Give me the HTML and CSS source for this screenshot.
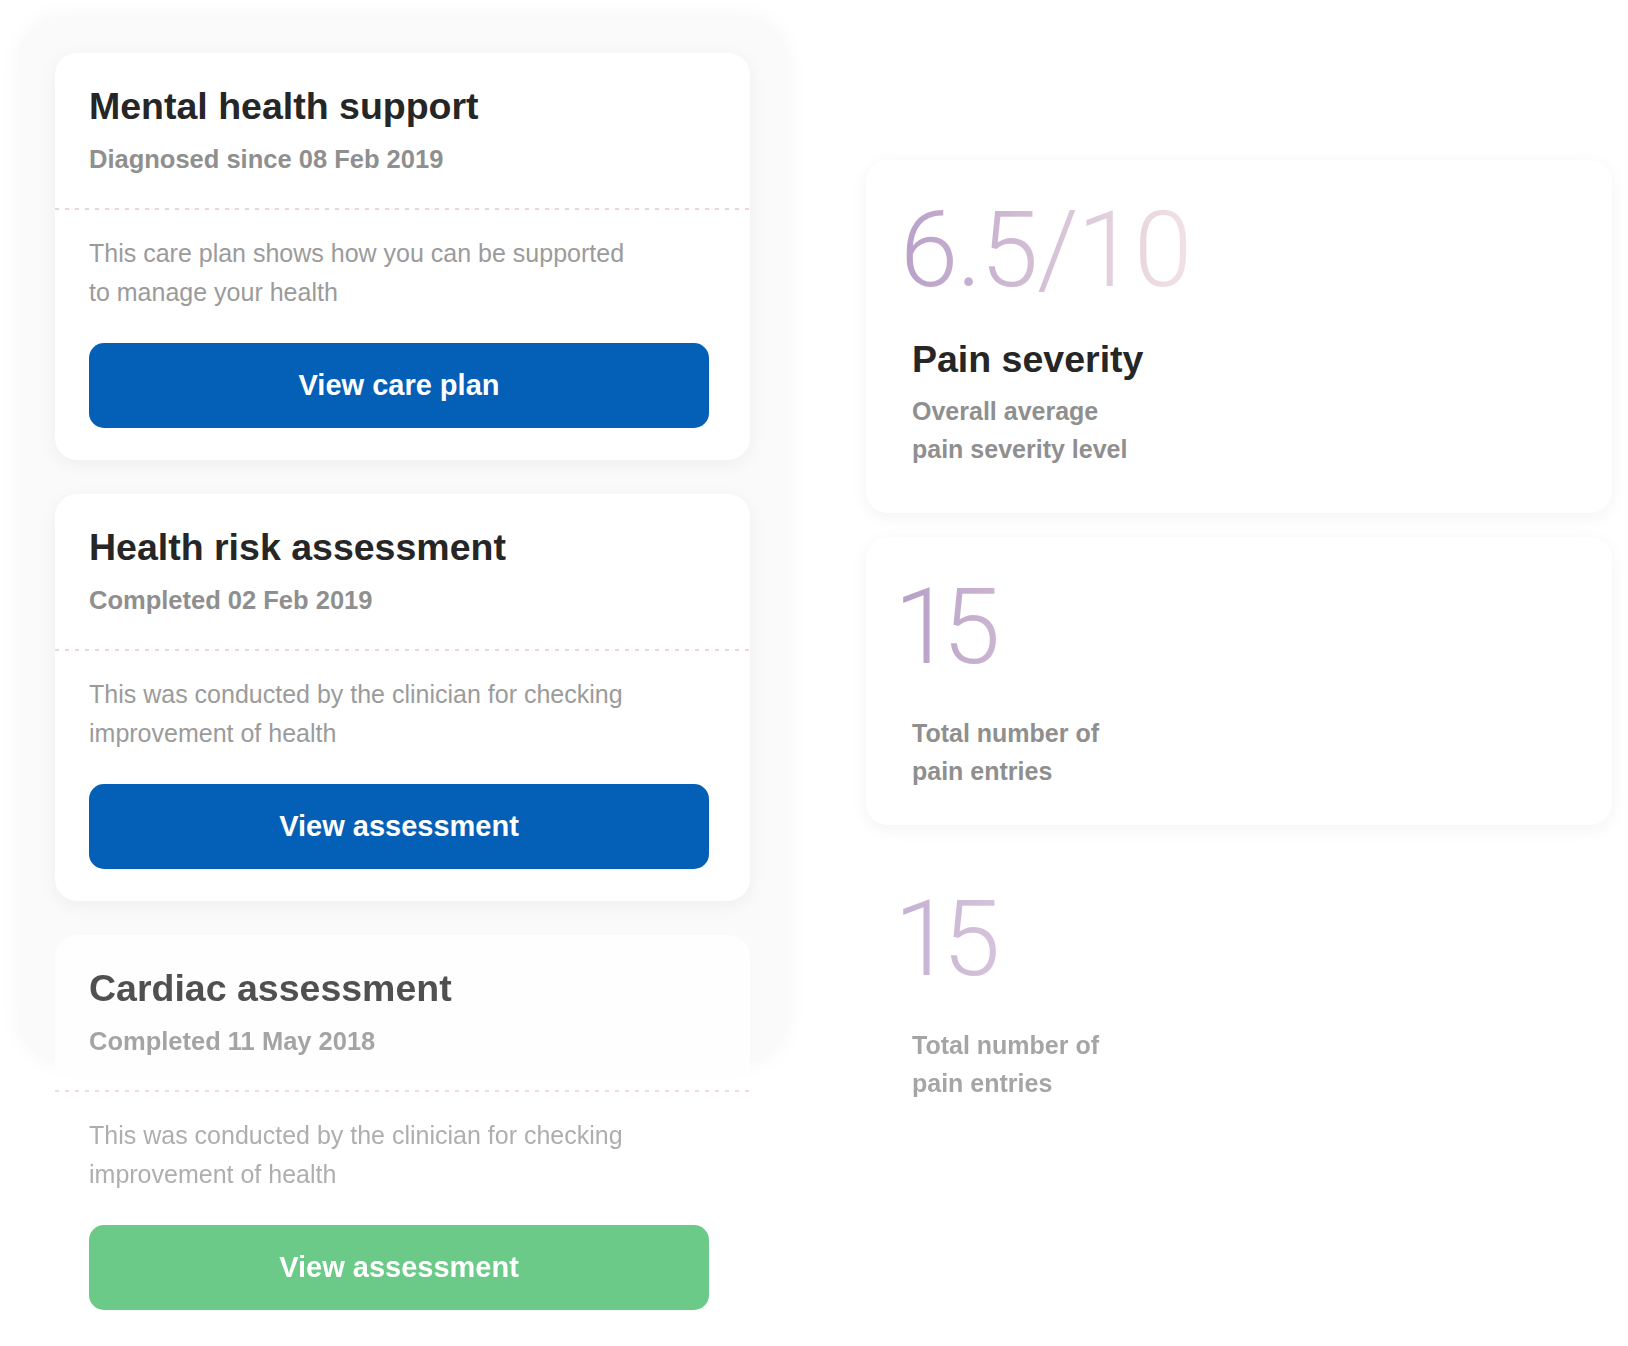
FILE: index.html
```html
<!DOCTYPE html>
<html lang="en">
<head>
<meta charset="utf-8">
<title>Care overview</title>
<link rel="stylesheet" href="styles.css">
</head>
<body>
<div class="page">
  <section class="panel">
    <article class="care-card">
      <header class="care-head">
        <h2 class="care-title">Mental health support</h2>
        <p class="care-date">Diagnosed since 08 Feb 2019</p>
      </header>
      <div class="care-divider"></div>
      <div class="care-body">
        <p class="care-text">This care plan shows how you can be supported<br>to manage your health</p>
        <a class="btn btn-blue" href="#">View care plan</a>
      </div>
    </article>

    <article class="care-card">
      <header class="care-head">
        <h2 class="care-title">Health risk assessment</h2>
        <p class="care-date">Completed 02 Feb 2019</p>
      </header>
      <div class="care-divider"></div>
      <div class="care-body">
        <p class="care-text">This was conducted by the clinician for checking<br>improvement of health</p>
        <a class="btn btn-blue" href="#">View assessment</a>
      </div>
    </article>

    <article class="care-card care-card--faded">
      <header class="care-head">
        <h2 class="care-title">Cardiac assessment</h2>
        <p class="care-date">Completed 11 May 2018</p>
      </header>
      <div class="care-divider"></div>
      <div class="care-body">
        <p class="care-text">This was conducted by the clinician for checking<br>improvement of health</p>
        <a class="btn btn-green" href="#">View assessment</a>
      </div>
    </article>
  </section>

  <section class="stats">
    <div class="stat-card stat-card--main">
      <div class="stat-value">6.5/10</div>
      <h3 class="stat-title">Pain severity</h3>
      <p class="stat-label stat-label--sub">Overall average<br>pain severity level</p>
    </div>
    <div class="stat-card">
      <div class="stat-value stat-value--count">15</div>
      <p class="stat-label">Total number of<br>pain entries</p>
    </div>
    <div class="stat-card stat-card--ghost">
      <div class="stat-value stat-value--count">15</div>
      <p class="stat-label">Total number of<br>pain entries</p>
    </div>
  </section>
</div>
</body>
</html>
```

FILE: styles.css
```css
* {
  box-sizing: border-box;
  margin: 0;
  padding: 0;
}

html, body {
  background: #ffffff;
}

body {
  font-family: "Liberation Sans", Arial, sans-serif;
}

.page {
  display: flex;
  align-items: flex-start;
  height: 1346px;
  overflow: hidden;
  padding: 15px 0 0 18px;
}

/* ---------- left list panel ---------- */
.panel {
  width: 770px;
  height: 1049px;
  flex-shrink: 0;
  background: #fafafa;
  border-radius: 46px;
  box-shadow: 0 0 24px rgba(0, 0, 0, 0.035);
  padding: 38px 38px 0 37px;
  display: flex;
  flex-direction: column;
  gap: 34px;
}

.care-card {
  flex-shrink: 0;
  background: #ffffff;
  border-radius: 22px;
  box-shadow: 0 4px 18px rgba(0, 0, 0, 0.05);
}

.care-card--faded {
  opacity: 0.8;
  box-shadow: none;
}

.care-head {
  padding: 30px 34px 31px;
}

.care-title {
  font-size: 37.5px;
  line-height: 46px;
  font-weight: 700;
  color: #262626;
}

.care-date {
  margin-top: 12px;
  font-size: 25.5px;
  line-height: 36px;
  font-weight: 700;
  color: #8f8f8f;
}

.care-divider {
  height: 2px;
  margin-right: -2px;
  background: repeating-linear-gradient(90deg, #ecd4dc 0 4px, transparent 4px 10px);
}

.care-body {
  padding: 24px 41px 32px 34px;
}

.care-text {
  font-size: 25px;
  line-height: 38.5px;
  color: #9b9b9b;
}

.btn {
  display: flex;
  align-items: center;
  justify-content: center;
  height: 85px;
  margin-top: 32px;
  border-radius: 15px;
  color: #ffffff;
  font-size: 29px;
  font-weight: 700;
  text-decoration: none;
}

.btn-blue {
  background: #0460b6;
}

.btn-green {
  background: #47be6b;
}

/* ---------- right stats column ---------- */
.stats {
  width: 746px;
  margin-left: 78px;
  padding-top: 145px;
  display: flex;
  flex-direction: column;
  gap: 24px;
}

.stat-card {
  background: #ffffff;
  border-radius: 22px;
  box-shadow: 0 4px 18px rgba(0, 0, 0, 0.05);
  padding: 40px 46px 35px;
}

.stat-card--main {
  padding-bottom: 45px;
}

.stat-card--ghost {
  background: transparent;
  box-shadow: none;
  opacity: 0.8;
}

.stat-value {
  font-family: Roboto, "Liberation Sans", sans-serif;
  font-weight: 300;
  font-size: 105px;
  line-height: 102px;
  letter-spacing: -1.5px;
  margin-left: -12px;
  background: linear-gradient(90deg, #b8a0c8 0px, #f2e2e4 290px);
  -webkit-background-clip: text;
  background-clip: text;
  color: transparent;
}

.stat-value--count {
  letter-spacing: -10px;
  margin-left: -18px;
  background: linear-gradient(90deg, #b8a0c8 10px, #f2e2e4 300px);
  -webkit-background-clip: text;
  background-clip: text;
}

.stat-title {
  margin-top: 35px;
  font-size: 37.5px;
  line-height: 44px;
  font-weight: 700;
  color: #262626;
}

.stat-label {
  margin-top: 35px;
  font-size: 25px;
  line-height: 38px;
  font-weight: 700;
  color: #8f8f8f;
}

.stat-label--sub {
  margin-top: 11px;
}
```
